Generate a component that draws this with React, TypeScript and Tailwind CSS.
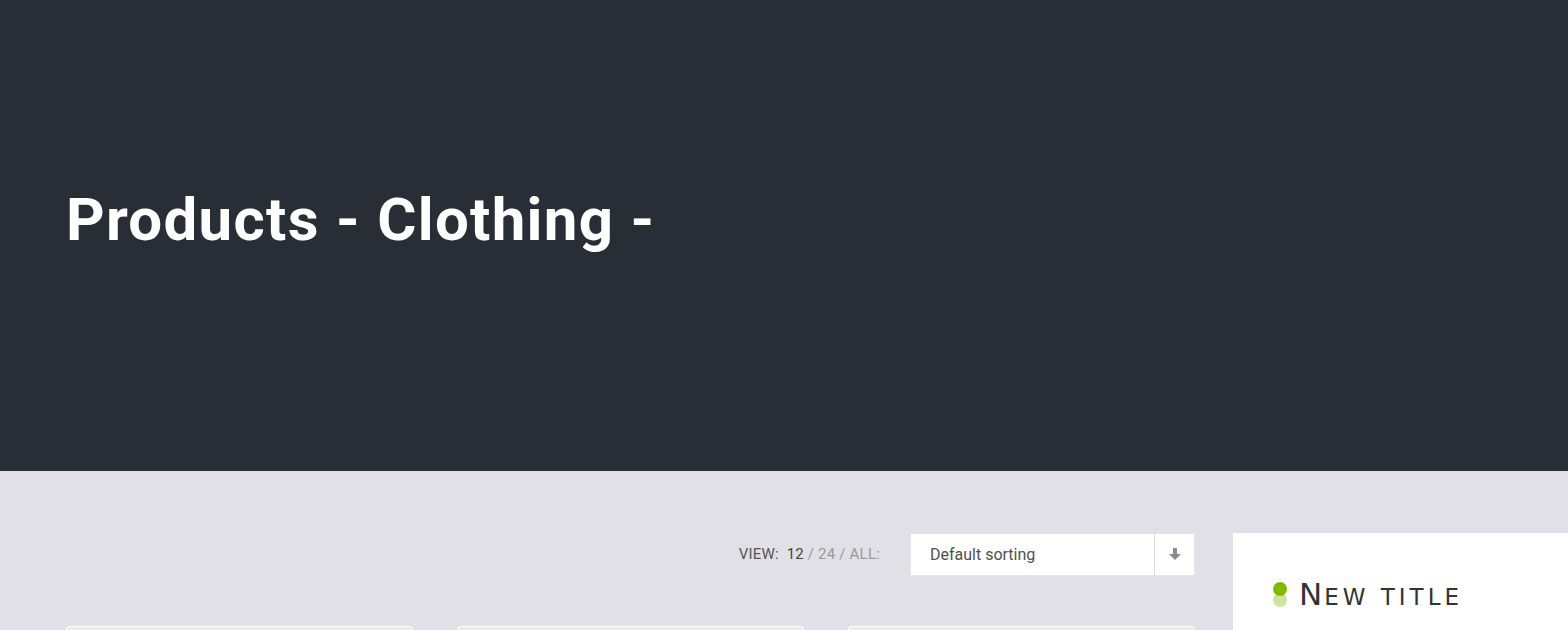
import React from "react";

function ArrowDown() {
  return (
    <svg width="12" height="13" viewBox="0 0 12 13" fill="#8a8a8a">
      <rect x="4" y="0" width="4" height="7" />
      <path d="M0 6 H12 L6 12 Z" />
    </svg>
  );
}

export default function App() {
  return (
    <div className="w-[1568px] h-[630px] overflow-hidden bg-[#e0e0e6]" style={{ fontFamily: "Roboto, 'Liberation Sans', sans-serif" }}>
      <div className="h-[471px] bg-[#292d36] flex items-center pl-[66px]">
        <h1 className="text-white text-[60px] font-bold tracking-[1.3px] leading-none mt-[-32px]" style={{ fontFamily: "Roboto, sans-serif" }}>
          Products - Clothing -
        </h1>
      </div>
      <div className="flex pl-[66px] pt-[62px]">
        <div className="w-[1129px] shrink-0">
          <div className="flex justify-end items-center h-[43px]">
            <div className="text-[15px] text-[#555] mr-[30px] tracking-[0.2px]">
              VIEW:&nbsp; <span className="text-[#444]">12</span>{" "}
              <span className="text-[#9a9a9a]">/ 24 / ALL:</span>
            </div>
            <div className="w-[285px] h-[43px] bg-white border border-[#e4e4e8] flex">
              <div className="flex-1 flex items-center pl-[19px] text-[16px] text-[#505050]">Default sorting</div>
              <div className="w-[40px] border-l border-[#dcdcdc] flex items-center justify-center">
                <ArrowDown />
              </div>
            </div>
          </div>
          <div className="grid grid-cols-3 gap-x-[44px] mt-[50px]">
            <div className="h-[40px] bg-[#e7edef] border border-white rounded-t-[3px]" />
            <div className="h-[40px] bg-[#e7edef] border border-white rounded-t-[3px]" />
            <div className="h-[40px] bg-[#e7edef] border border-white rounded-t-[3px]" />
          </div>
        </div>
        <div className="ml-[38px] w-[400px] shrink-0 h-[200px] bg-white pt-[46px] pl-[40px]">
          <div className="flex items-center">
            <div className="relative w-[14px] h-[25px] mr-[12px]">
              <div className="absolute top-[11px] left-0 w-[14px] h-[14px] rounded-full bg-[#cfe39a]" />
              <div className="absolute top-0 left-0 w-[14px] h-[14px] rounded-full bg-[#7fba00]" />
            </div>
            <div className="text-[#333] leading-none" style={{ fontFamily: "'DejaVu Sans', sans-serif" }}>
              <span className="text-[31px] tracking-[2px]">N</span>
              <span className="text-[23px] tracking-[4px]">EW TITLE</span>
            </div>
          </div>
        </div>
      </div>
    </div>
  );
}
